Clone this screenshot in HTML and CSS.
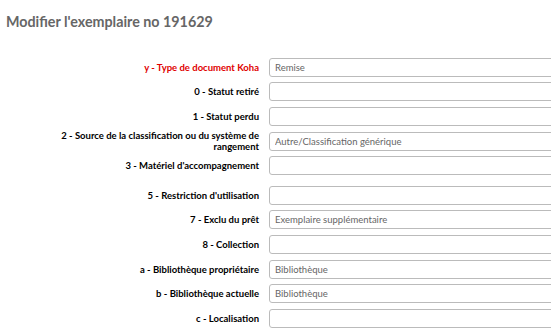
FILE: index.html
```html
<!DOCTYPE html>
<html lang="fr">
<head>
    <meta charset="UTF-8">
    <meta name="viewport" content="width=device-width, initial-scale=1.0">
    <title>Modifier l'exemplaire</title>
    <link rel="stylesheet" href="styles.css">
</head>
<body>
    <div class="page">
        <h1 class="page-title">Modifier l'exemplaire no 191629</h1>

        <form class="item-form">
            <ol class="fields">
                <li class="field">
                    <label class="field-label required">y - Type de document Koha</label>
                    <input class="field-input" type="text" value="Remise">
                </li>
                <li class="field">
                    <label class="field-label">0 - Statut retiré</label>
                    <input class="field-input" type="text">
                </li>
                <li class="field">
                    <label class="field-label">1 - Statut perdu</label>
                    <input class="field-input" type="text">
                </li>
                <li class="field">
                    <label class="field-label">2 - Source de la classification ou du système de rangement</label>
                    <input class="field-input" type="text" value="Autre/Classification générique">
                </li>
                <li class="field field-spaced">
                    <label class="field-label">3 - Matériel d'accompagnement</label>
                    <input class="field-input" type="text">
                </li>
                <li class="field">
                    <label class="field-label">5 - Restriction d'utilisation</label>
                    <input class="field-input" type="text">
                </li>
                <li class="field">
                    <label class="field-label">7 - Exclu du prêt</label>
                    <input class="field-input" type="text" value="Exemplaire supplémentaire">
                </li>
                <li class="field">
                    <label class="field-label">8 - Collection</label>
                    <input class="field-input" type="text">
                </li>
                <li class="field">
                    <label class="field-label">a - Bibliothèque propriétaire</label>
                    <input class="field-input" type="text" value="Bibliothèque">
                </li>
                <li class="field">
                    <label class="field-label">b - Bibliothèque actuelle</label>
                    <input class="field-input" type="text" value="Bibliothèque">
                </li>
                <li class="field">
                    <label class="field-label">c - Localisation</label>
                    <input class="field-input" type="text">
                </li>
            </ol>
        </form>
    </div>
</body>
</html>
```

FILE: styles.css
```css
* {
    margin: 0;
    padding: 0;
    box-sizing: border-box;
}

body {
    font-family: 'Lato', sans-serif;
    background: #fff;
    color: #000;
    overflow: hidden;
}

.page {
    padding: 13px 0 0 6px;
    width: 100%;
    overflow: hidden;
}

.page-title {
    font-size: 14.3px;
    font-weight: 700;
    color: #666;
    line-height: 17px;
    margin-bottom: 25px;
}

.fields {
    list-style: none;
}

.field {
    display: flex;
    align-items: center;
    height: 24.6px;
}

.field-spaced {
    margin-bottom: 5px;
}

.field-label {
    flex: 0 0 200px;
    margin-left: 53px;
    margin-right: 10px;
    text-align: right;
    font-size: 9.5px;
    font-weight: 700;
    line-height: 11px;
}

.field-label.required {
    color: #e00000;
}

.field-input {
    flex: 0 0 300px;
    height: 19px;
    border: 1px solid #bbb;
    border-radius: 3px;
    padding: 0 5px;
    font-family: 'Lato', sans-serif;
    font-size: 9.5px;
    color: #666;
    background: #fff;
}
```
